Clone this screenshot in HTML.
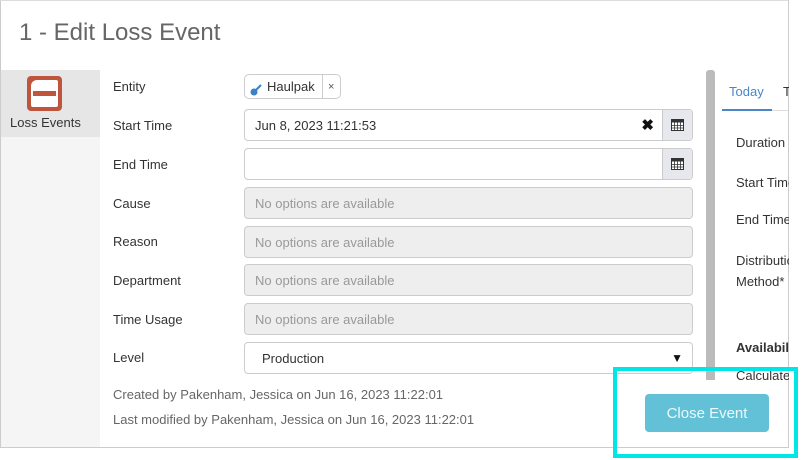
<!DOCTYPE html>
<html><head><meta charset="utf-8"><style>
*{box-sizing:border-box;margin:0;padding:0}
body{width:802px;height:460px;background:#fff;font-family:"Liberation Sans",sans-serif;position:relative;overflow:hidden;color:#333}
.a{position:absolute}
.lbl{position:absolute;left:113px;font-size:13px;color:#333}
.inp{position:absolute;left:244px;width:449px;height:32px;border:1px solid #ccc;border-radius:4px;background:#fff;font-size:13px;padding-left:10px;line-height:31px}
.dis{background:#eee;color:#999}
.cal{position:absolute;right:0;top:0;width:30px;height:30px;background:#e6e8ee;border-left:1px solid #ccc;border-radius:0 4px 4px 0}
</style></head><body>
<div class="a" style="left:0;top:0;width:1px;height:448px;background:#ccc"></div>
<div class="a" style="left:0;top:0;width:789px;height:1px;background:#ddd"></div>
<div class="a" style="left:0;top:447px;width:789px;height:1px;background:#ccc"></div>
<div class="a" style="left:788px;top:0;width:1px;height:448px;background:#ccc"></div>
<div class="a" style="left:19px;top:19px;font-size:24px;color:#666">1 - Edit Loss Event</div>
<div class="a" style="left:1px;top:70px;width:99px;height:377px;background:#f5f5f5"></div>
<div class="a" style="left:1px;top:70px;width:99px;height:67px;background:#e6e6e6"></div>
<div class="a" style="left:27px;top:76px;width:35px;height:35px;background:#c0553e;border-radius:4px"></div>
<div class="a" style="left:31px;top:80px;width:27px;height:27px;background:#fff;border-radius:6px 2px 2px 2px"></div>
<div class="a" style="left:33px;top:91px;width:23px;height:5px;background:#c0553e"></div>
<div class="a" style="left:10px;top:115px;font-size:13px;color:#333">Loss Events</div>

<div class="lbl" style="top:79px">Entity</div>
<div class="a" style="left:244px;top:74px;width:97px;height:25px;border:1px solid #ccc;border-radius:5px;font-size:13px;line-height:24px">
<span style="position:absolute;left:5px;top:5px;width:12px;height:12px"><svg width="13" height="13" viewBox="0 0 13 13"><path d="M6 7 L11 2" stroke="#3b82c4" stroke-width="2"/><circle cx="4" cy="9" r="3.5" fill="#3b82c4"/></svg></span>
<span style="position:absolute;left:22px">Haulpak</span>
<span style="position:absolute;left:77px;top:0;height:23px;border-left:1px solid #ccc;padding-left:5px;font-size:11px;color:#555">×</span></div>

<div class="lbl" style="top:118px">Start Time</div>
<div class="inp" style="top:109px">Jun 8, 2023 11:21:53<span class="a" style="right:38px;top:0;font-weight:bold;font-size:15px;color:#111">✖</span><div class="cal"><svg class="a" style="left:8px;top:8px" width="13" height="13" viewBox="0 0 13 13"><rect x="0.5" y="1.5" width="12" height="11" fill="#fff" stroke="#333"/><rect x="0.5" y="1.5" width="12" height="3" fill="#333"/><path d="M0 7.5H13M0 10H13M3.5 4V13M6.5 4V13M9.5 4V13" stroke="#333" stroke-width="0.8"/></svg></div></div>

<div class="lbl" style="top:157px">End Time</div>
<div class="inp" style="top:148px"><div class="cal"><svg class="a" style="left:8px;top:8px" width="13" height="13" viewBox="0 0 13 13"><rect x="0.5" y="1.5" width="12" height="11" fill="#fff" stroke="#333"/><rect x="0.5" y="1.5" width="12" height="3" fill="#333"/><path d="M0 7.5H13M0 10H13M3.5 4V13M6.5 4V13M9.5 4V13" stroke="#333" stroke-width="0.8"/></svg></div></div>

<div class="lbl" style="top:196px">Cause</div>
<div class="inp dis" style="top:187px">No options are available</div>
<div class="lbl" style="top:234px">Reason</div>
<div class="inp dis" style="top:226px">No options are available</div>
<div class="lbl" style="top:273px">Department</div>
<div class="inp dis" style="top:264px">No options are available</div>
<div class="lbl" style="top:312px">Time Usage</div>
<div class="inp dis" style="top:303px">No options are available</div>
<div class="lbl" style="top:350px">Level</div>
<div class="inp" style="top:342px;padding-left:17px">Production<span class="a" style="right:9px;top:0;font-size:12px;color:#111">▼</span></div>

<div class="a" style="left:113px;top:387px;font-size:13px;color:#666">Created by Pakenham, Jessica on Jun 16, 2023 11:22:01</div>
<div class="a" style="left:113px;top:412px;font-size:13px;color:#666">Last modified by Pakenham, Jessica on Jun 16, 2023 11:22:01</div>

<div class="a" style="left:706px;top:70px;width:9px;height:310px;background:#bbb;border-radius:3px 3px 0 0"></div>

<div class="a" style="left:729px;top:84px;font-size:13px;color:#4a86c8">Today</div>
<div class="a" style="left:783px;top:84px;font-size:13px;color:#333">T</div>
<div class="a" style="left:722px;top:110px;width:66px;height:1px;background:#ddd"></div>
<div class="a" style="left:722px;top:109px;width:50px;height:2px;background:#4a86c8"></div>
<div class="a" style="left:736px;top:135px;font-size:13px">Duration</div>
<div class="a" style="left:736px;top:175px;font-size:13px">Start Time</div>
<div class="a" style="left:736px;top:212px;font-size:13px">End Time</div>
<div class="a" style="left:736px;top:250px;font-size:13px;line-height:21px">Distribution<br>Method*</div>
<div class="a" style="left:736px;top:340px;font-size:13px;font-weight:bold">Availability</div>
<div class="a" style="left:736px;top:368px;font-size:13px">Calculated</div>
<div class="a" style="left:789px;top:0;width:13px;height:460px;background:#fff"></div>

<div class="a" style="left:613px;top:367px;width:185px;height:91px;border:4px solid #00e5e5"></div>
<div class="a" style="left:645px;top:394px;width:124px;height:38px;background:#62c1d6;border-radius:4px;color:#eafaff;font-size:15px;text-align:center;line-height:39px">Close Event</div>
</body></html>
